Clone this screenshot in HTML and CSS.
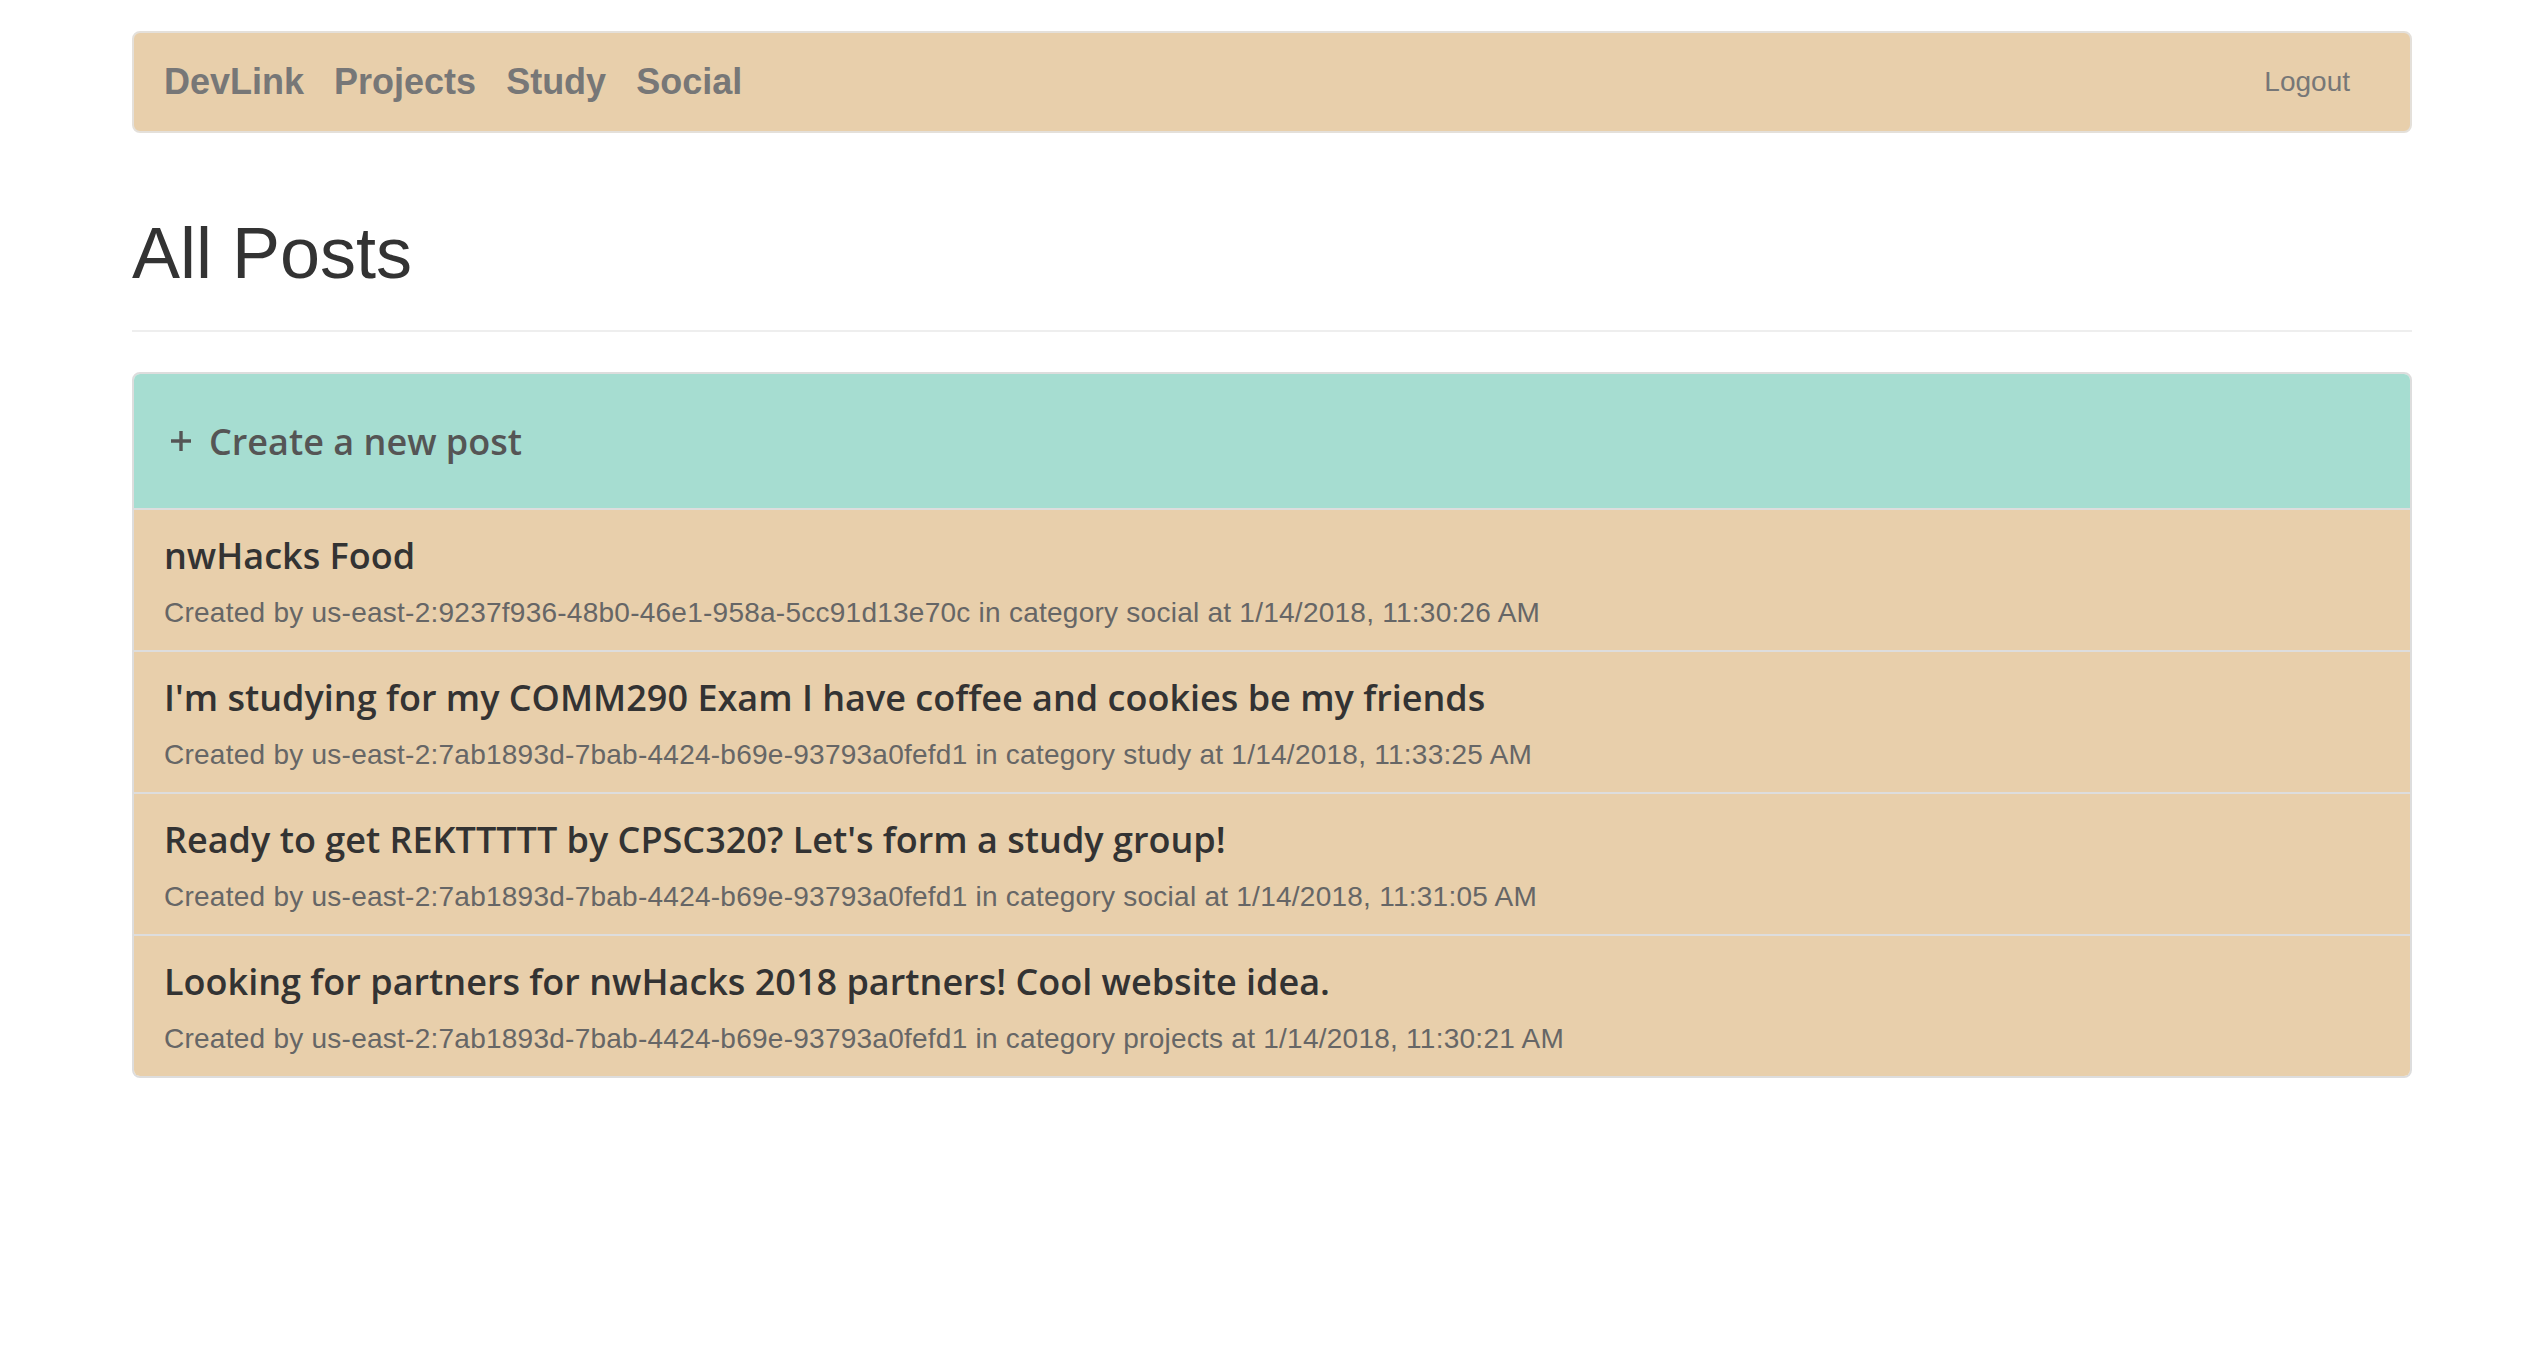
FILE: index.html
```html
<!DOCTYPE html>
<html lang="en">
<head>
<meta charset="utf-8">
<title>DevLink - All Posts</title>
<link rel="stylesheet" href="styles.css">
</head>
<body>
<div class="container">
  <nav class="navbar">
    <ul class="nav-left">
      <li><a class="nav-link" href="#">DevLink</a></li>
      <li><a class="nav-link" href="#">Projects</a></li>
      <li><a class="nav-link" href="#">Study</a></li>
      <li><a class="nav-link" href="#">Social</a></li>
    </ul>
    <a class="logout" href="#">Logout</a>
  </nav>

  <div class="page-header">
    <h1>All Posts</h1>
  </div>

  <div class="panel">
    <a class="create" href="#">
      <svg class="plus" width="24" height="24" viewBox="0 0 24 24"><path d="M12 2V22M2 12H22" stroke="#555" stroke-width="3.4" fill="none"/></svg>
      <span>Create a new post</span>
    </a>
    <div class="post">
      <h4 class="post-title">nwHacks Food</h4>
      <p class="post-meta">Created by us-east-2:9237f936-48b0-46e1-958a-5cc91d13e70c in category social at 1/14/2018, 11:30:26 AM</p>
    </div>
    <div class="post">
      <h4 class="post-title">I'm studying for my COMM290 Exam I have coffee and cookies be my friends</h4>
      <p class="post-meta">Created by us-east-2:7ab1893d-7bab-4424-b69e-93793a0fefd1 in category study at 1/14/2018, 11:33:25 AM</p>
    </div>
    <div class="post">
      <h4 class="post-title">Ready to get REKTTTTT by CPSC320? Let's form a study group!</h4>
      <p class="post-meta">Created by us-east-2:7ab1893d-7bab-4424-b69e-93793a0fefd1 in category social at 1/14/2018, 11:31:05 AM</p>
    </div>
    <div class="post">
      <h4 class="post-title">Looking for partners for nwHacks 2018 partners! Cool website idea.</h4>
      <p class="post-meta">Created by us-east-2:7ab1893d-7bab-4424-b69e-93793a0fefd1 in category projects at 1/14/2018, 11:30:21 AM</p>
    </div>
  </div>
</div>
</body>
</html>
```

FILE: styles.css
```css
* {
  box-sizing: border-box;
}

html, body {
  margin: 0;
  padding: 0;
  background: #ffffff;
}

body {
  font-family: "Liberation Sans", Arial, sans-serif;
  color: #333333;
}

.container {
  width: 2280px;
  margin: 0 auto;
  padding-top: 31px;
}

.navbar {
  height: 102px;
  background: #e8cfab;
  border: 2px solid #e4e0da;
  border-radius: 8px;
  display: flex;
  align-items: center;
  justify-content: space-between;
  padding: 0 60px 0 30px;
}

.nav-left {
  list-style: none;
  margin: 0;
  padding: 0;
  display: flex;
  gap: 30px;
}

.nav-link {
  font-family: "Liberation Sans", Arial, sans-serif;
  font-weight: bold;
  font-size: 36px;
  color: #777777;
  text-decoration: none;
}

.logout {
  font-family: "Liberation Sans", Arial, sans-serif;
  font-size: 28px;
  color: #777777;
  text-decoration: none;
}

.page-header {
  margin: 81px 0 40px;
  padding-bottom: 17px;
  border-bottom: 2px solid #eeeeee;
}

.page-header h1 {
  margin: 0 0 20px;
  font-family: "Liberation Sans", Arial, sans-serif;
  font-weight: normal;
  font-size: 72px;
  line-height: 1.1;
  color: #333333;
}

.panel {
  border: 2px solid #dddddd;
  border-radius: 8px;
  overflow: hidden;
}

.create {
  height: 136px;
  background: #a6ddd1;
  border-bottom: 2px solid #dddddd;
  display: flex;
  align-items: center;
  padding-left: 35px;
  gap: 16px;
  text-decoration: none;
  font-family: "Open Sans", sans-serif;
  font-weight: 600;
  font-size: 36px;
  color: #555555;
}

.plus {
  display: block;
  flex: none;
}

.post {
  height: 142px;
  background: #e8cfab;
  border-bottom: 2px solid #dddddd;
  padding: 26px 30px 0;
}

.post:last-child {
  height: 140px;
  border-bottom: none;
}

.post-title {
  margin: 0 0 17px;
  font-family: "Open Sans", sans-serif;
  font-weight: 600;
  font-size: 36px;
  line-height: 40px;
  color: #333333;
}

.post-meta {
  margin: 0;
  font-family: "Liberation Sans", Arial, sans-serif;
  font-size: 28px;
  line-height: 40px;
  letter-spacing: 0.25px;
  color: #666666;
}
```
